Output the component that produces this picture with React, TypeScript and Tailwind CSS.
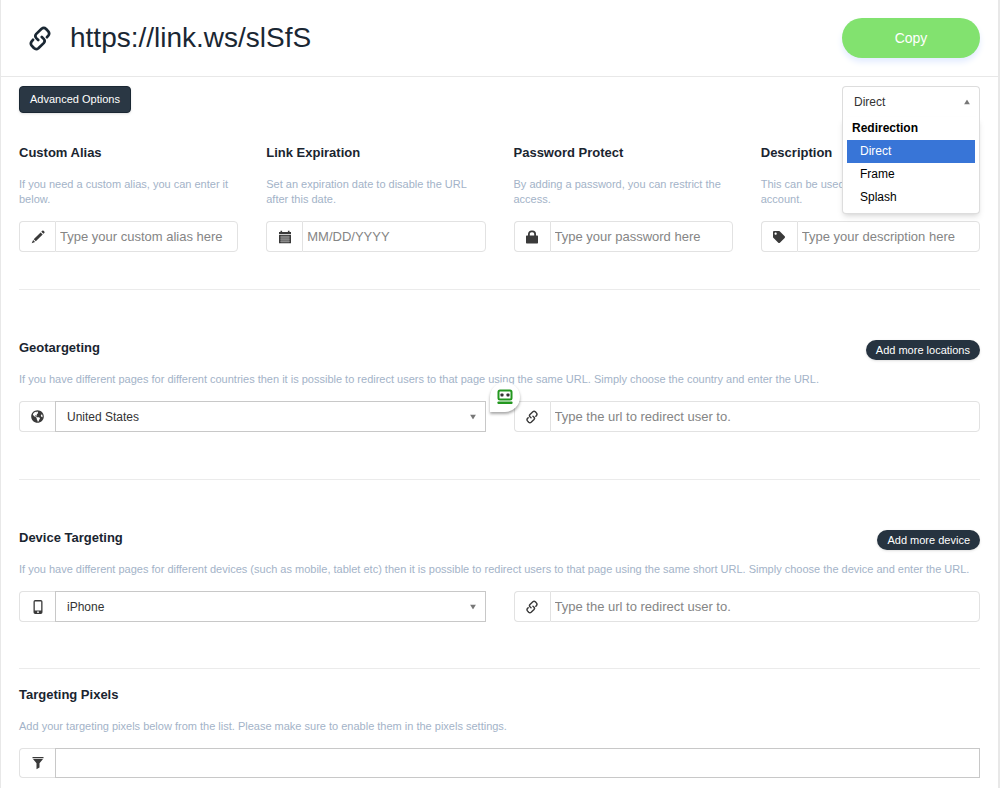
import { useState, type ReactNode } from "react";
import { FaGlobeAmericas, FaTag } from "react-icons/fa";

const REDIRECTIONS = ["Direct", "Frame", "Splash"];

function LinkIcon({ className }: { className?: string }) {
  return (
    <svg viewBox="0 0 22 25" className={className} fill="none" stroke="currentColor" strokeWidth="2.7" strokeLinecap="round" strokeLinejoin="round" aria-hidden="true">
      <path d="M9.2 14 7.3 12.1Q5.4 10 7.3 7.900L12.600 2.800Q14.900 1 17.100 3L19.300 5.400Q21 7.600 19.300 9.700L18 11.200" />
      <path d="M12.800 11 14.700 12.900Q16.600 15 14.700 17.100L9.400 22.200Q7.100 24 4.900 22L2.700 19.600Q1 17.400 2.700 15.300L4 13.800" />
    </svg>
  );
}

function PencilIcon() {
  return (
    <svg viewBox="0 0 14 14" className="size-3.5" fill="currentColor" aria-hidden="true">
      <path d="M10.3 1.7 11.2.8a1 1 0 0 1 1.4 0l.7.7a1 1 0 0 1 0 1.4l-.9.9zM9.6 2.4l2.1 2.1-6.9 6.8-2.1-2.1zM2.1 9.9l2 2-3.4 1.4z" />
    </svg>
  );
}

function CalendarIcon() {
  return (
    <svg viewBox="0 0 14 14" className="size-3.5" aria-hidden="true">
      <path fill="currentColor" d="M1 2h1.5V.7h1.6V2h5.8V.7h1.6V2H13v2.3H1zM1 5h12v8.3H1z" />
      <path stroke="#fff" strokeWidth=".4" d="M2 7h10M2 9.1h10M2 11.2h10M4 5.6v7M6 5.6v7M8 5.6v7M10 5.6v7" />
    </svg>
  );
}

function LockIcon() {
  return (
    <svg viewBox="0 0 14 14" className="size-3.5" aria-hidden="true">
      <path fill="none" stroke="currentColor" strokeWidth="1.8" d="M3.9 6.5V4a2.6 2.6 0 0 1 2.6-2.6h1A2.6 2.6 0 0 1 10.1 4v2.5" />
      <rect x="1" y="5.5" width="12" height="8" rx=".7" fill="currentColor" />
    </svg>
  );
}

function PhoneIcon() {
  return (
    <svg viewBox="0 0 14 14" className="size-3.5" aria-hidden="true">
      <path fill="currentColor" fillRule="evenodd" d="M4.2 0h5.6a1.7 1.7 0 0 1 1.7 1.7v10.6a1.7 1.7 0 0 1-1.7 1.7H4.2a1.7 1.7 0 0 1-1.7-1.7V1.7A1.7 1.7 0 0 1 4.2 0zM3.8 1.6v9h6.4v-9zM6 11.6v1.2h2v-1.2z" />
    </svg>
  );
}

function FilterIcon() {
  return (
    <svg viewBox="0 0 14 14" className="size-3.5" fill="currentColor" aria-hidden="true">
      <path d="M1.5 1h11v1.3h-11zM2 3h10L8.5 7.3v4.2L5.5 13.3v-6z" />
    </svg>
  );
}

function Caret({ up }: { up?: boolean }) {
  return (
    <svg viewBox="0 0 6 5" className="pointer-events-none absolute right-2.5 top-1/2 h-[5px] w-1.5 -translate-y-1/2" fill="#777" aria-hidden="true">
      <path d={up ? "M0 5 3 0l3 5z" : "M0 0h6L3 5z"} />
    </svg>
  );
}

function Title({ children }: { children: ReactNode }) {
  return <h3 className="text-[13px] font-bold leading-5 text-[#1a2530]">{children}</h3>;
}

function Hint({ children }: { children: ReactNode }) {
  return <p className="my-3.5 text-[11px] leading-[15px] text-[#a3b3c8]">{children}</p>;
}

function Addon({ children }: { children: ReactNode }) {
  return (
    <span className="grid w-9 shrink-0 place-items-center rounded-l border border-r-0 border-[#e2e2e2] text-[#3a3a3a]">
      {children}
    </span>
  );
}

function TextField({ icon, label, placeholder, type = "text" }: { icon: ReactNode; label: string; placeholder: string; type?: string }) {
  return (
    <label className="flex h-[31px]">
      <Addon>{icon}</Addon>
      <input
        type={type}
        aria-label={label}
        placeholder={placeholder}
        className="w-full min-w-0 rounded-r border border-[#e2e2e2] px-1 text-[13px] placeholder:text-[#858585] focus:outline-none"
      />
    </label>
  );
}

function SelectField({ icon, label, options }: { icon: ReactNode; label: string; options: string[] }) {
  return (
    <label className="flex h-[31px]">
      <Addon>{icon}</Addon>
      <span className="relative flex flex-1">
        <select aria-label={label} className="w-full appearance-none border border-[#c8c8c8] bg-white px-[11px] text-xs text-[#333] focus:outline-none">
          {options.map((o) => (
            <option key={o}>{o}</option>
          ))}
        </select>
        <Caret />
      </span>
    </label>
  );
}

function PillButton({ children }: { children: ReactNode }) {
  return (
    <button type="button" className="mt-0.5 h-5 rounded-full bg-[#263340] px-2.5 text-[11px] leading-5 text-white shadow-sm">
      {children}
    </button>
  );
}

function RedirectionSelect() {
  const [value, setValue] = useState("Direct");

  return (
    <div className="relative z-10 w-[138px]">
      <div className="relative">
        <select
          aria-label="Redirection"
          value={value}
          onChange={(e) => setValue(e.target.value)}
          className="h-[31px] w-full appearance-none rounded-t-sm border border-b-0 border-[#ddd] bg-white px-[11px] text-xs text-[#333] focus:outline-none"
        >
          {REDIRECTIONS.map((r) => (
            <option key={r}>{r}</option>
          ))}
        </select>
        <Caret up />
      </div>
      <div className="absolute inset-x-0 top-[31px] rounded-b border border-t-0 border-[#ddd] bg-white px-1 pb-1 text-xs text-black shadow-md">
        <p className="px-[5px] font-bold leading-[23px]">Redirection</p>
        <ul role="listbox" aria-label="Redirection">
          {REDIRECTIONS.map((r) => (
            <li
              key={r}
              role="option"
              aria-selected={r === value}
              onClick={() => setValue(r)}
              className={r === value ? "bg-[#3875d7] px-[13px] leading-[23px] text-white" : "px-[13px] leading-[23px]"}
            >
              {r}
            </li>
          ))}
        </ul>
      </div>
    </div>
  );
}

function FormBadge() {
  return (
    <span className="absolute -top-[19px] left-1/2 -ml-2.5 grid size-[30px] place-items-center rounded-full rounded-bl-none bg-white shadow-[0_2px_3px_rgba(0,0,0,0.35)]">
      <svg viewBox="0 0 16 16" className="size-4" aria-hidden="true">
        <rect x="1.5" y="1.5" width="13" height="9" rx="1.5" fill="#fff" stroke="#23971f" strokeWidth="2" />
        <rect x="3.5" y="4.5" width="3" height="3" rx=".8" fill="#333" />
        <rect x="9.5" y="4.5" width="3" height="3" rx=".8" fill="#333" />
        <rect x=".5" y="12.5" width="15" height="2.5" rx=".8" fill="#23971f" />
      </svg>
    </span>
  );
}

export default function App() {
  return (
    <div className="min-h-screen bg-[#f4f4f4] font-['Liberation_Sans',Arial,sans-serif]">
      <div className="min-h-screen border-l border-r-2 border-[#e8e8e8] bg-white">
        <header className="flex h-[77px] items-center justify-between border-b border-[#e8e8e8] pl-7 pr-[18px] text-[#1a2733]">
          <div className="flex items-center gap-[19px]">
            <LinkIcon className="h-[25px] w-[22px]" />
            <h1 className="text-[28px] leading-8">https://link.ws/slSfS</h1>
          </div>
          <button type="button" className="h-10 w-[138px] rounded-full bg-[#82e26f] text-sm text-white shadow-[0_4px_6px_#e3ecff]">
            Copy
          </button>
        </header>

        <main className="px-[18px] pb-2.5 pt-[9px]">
          <div className="flex h-[27px] items-start justify-between">
            <button type="button" className="h-[27px] rounded-sm border border-[#1a2733] bg-[#2a3744] px-2.5 text-[11px] text-white shadow-sm">
              Advanced Options
            </button>
            <RedirectionSelect />
          </div>

          <section className="mt-[30px] grid grid-cols-4 gap-7">
            <div>
              <Title>Custom Alias</Title>
              <Hint>If you need a custom alias, you can enter it below.</Hint>
              <TextField icon={<PencilIcon />} label="Custom Alias" placeholder="Type your custom alias here" />
            </div>
            <div>
              <Title>Link Expiration</Title>
              <Hint>Set an expiration date to disable the URL after this date.</Hint>
              <TextField icon={<CalendarIcon />} label="Link Expiration" placeholder="MM/DD/YYYY" />
            </div>
            <div>
              <Title>Password Protect</Title>
              <Hint>By adding a password, you can restrict the access.</Hint>
              <TextField icon={<LockIcon />} label="Password Protect" placeholder="Type your password here" type="password" />
            </div>
            <div>
              <Title>Description</Title>
              <Hint>This can be used to identify URLs on your account.</Hint>
              <TextField icon={<FaTag className="size-3" />} label="Description" placeholder="Type your description here" />
            </div>
          </section>

          <hr className="mb-12 mt-[37px] border-[#ebebeb]" />

          <section>
            <div className="flex h-5 items-start justify-between">
              <Title>Geotargeting</Title>
              <PillButton>Add more locations</PillButton>
            </div>
            <Hint>
              If you have different pages for different countries then it is possible to redirect users to that page using the same URL. Simply choose the country and enter the URL.
            </Hint>
            <div className="relative grid grid-cols-2 gap-7">
              <SelectField icon={<FaGlobeAmericas className="size-[13px]" />} label="Country" options={["United States"]} />
              <TextField icon={<LinkIcon className="h-3.5 w-3" />} label="Country URL" placeholder="Type the url to redirect user to." />
              <FormBadge />
            </div>
          </section>

          <hr className="mb-12 mt-[47px] border-[#ebebeb]" />

          <section>
            <div className="flex h-5 items-start justify-between">
              <Title>Device Targeting</Title>
              <PillButton>Add more device</PillButton>
            </div>
            <Hint>
              If you have different pages for different devices (such as mobile, tablet etc) then it is possible to redirect users to that page using the same short URL. Simply choose the device and enter the URL.
            </Hint>
            <div className="grid grid-cols-2 gap-7">
              <SelectField icon={<PhoneIcon />} label="Device" options={["iPhone"]} />
              <TextField icon={<LinkIcon className="h-3.5 w-3" />} label="Device URL" placeholder="Type the url to redirect user to." />
            </div>
          </section>

          <hr className="mb-4 mt-[46px] border-[#ebebeb]" />

          <section>
            <Title>Targeting Pixels</Title>
            <Hint>Add your targeting pixels below from the list. Please make sure to enable them in the pixels settings.</Hint>
            <label className="flex h-[30px]">
              <Addon>
                <FilterIcon />
              </Addon>
              <input type="text" aria-label="Targeting Pixels" className="w-full border border-[#c8c8c8] px-1 text-[13px] focus:outline-none" />
            </label>
          </section>
        </main>
      </div>
    </div>
  );
}
